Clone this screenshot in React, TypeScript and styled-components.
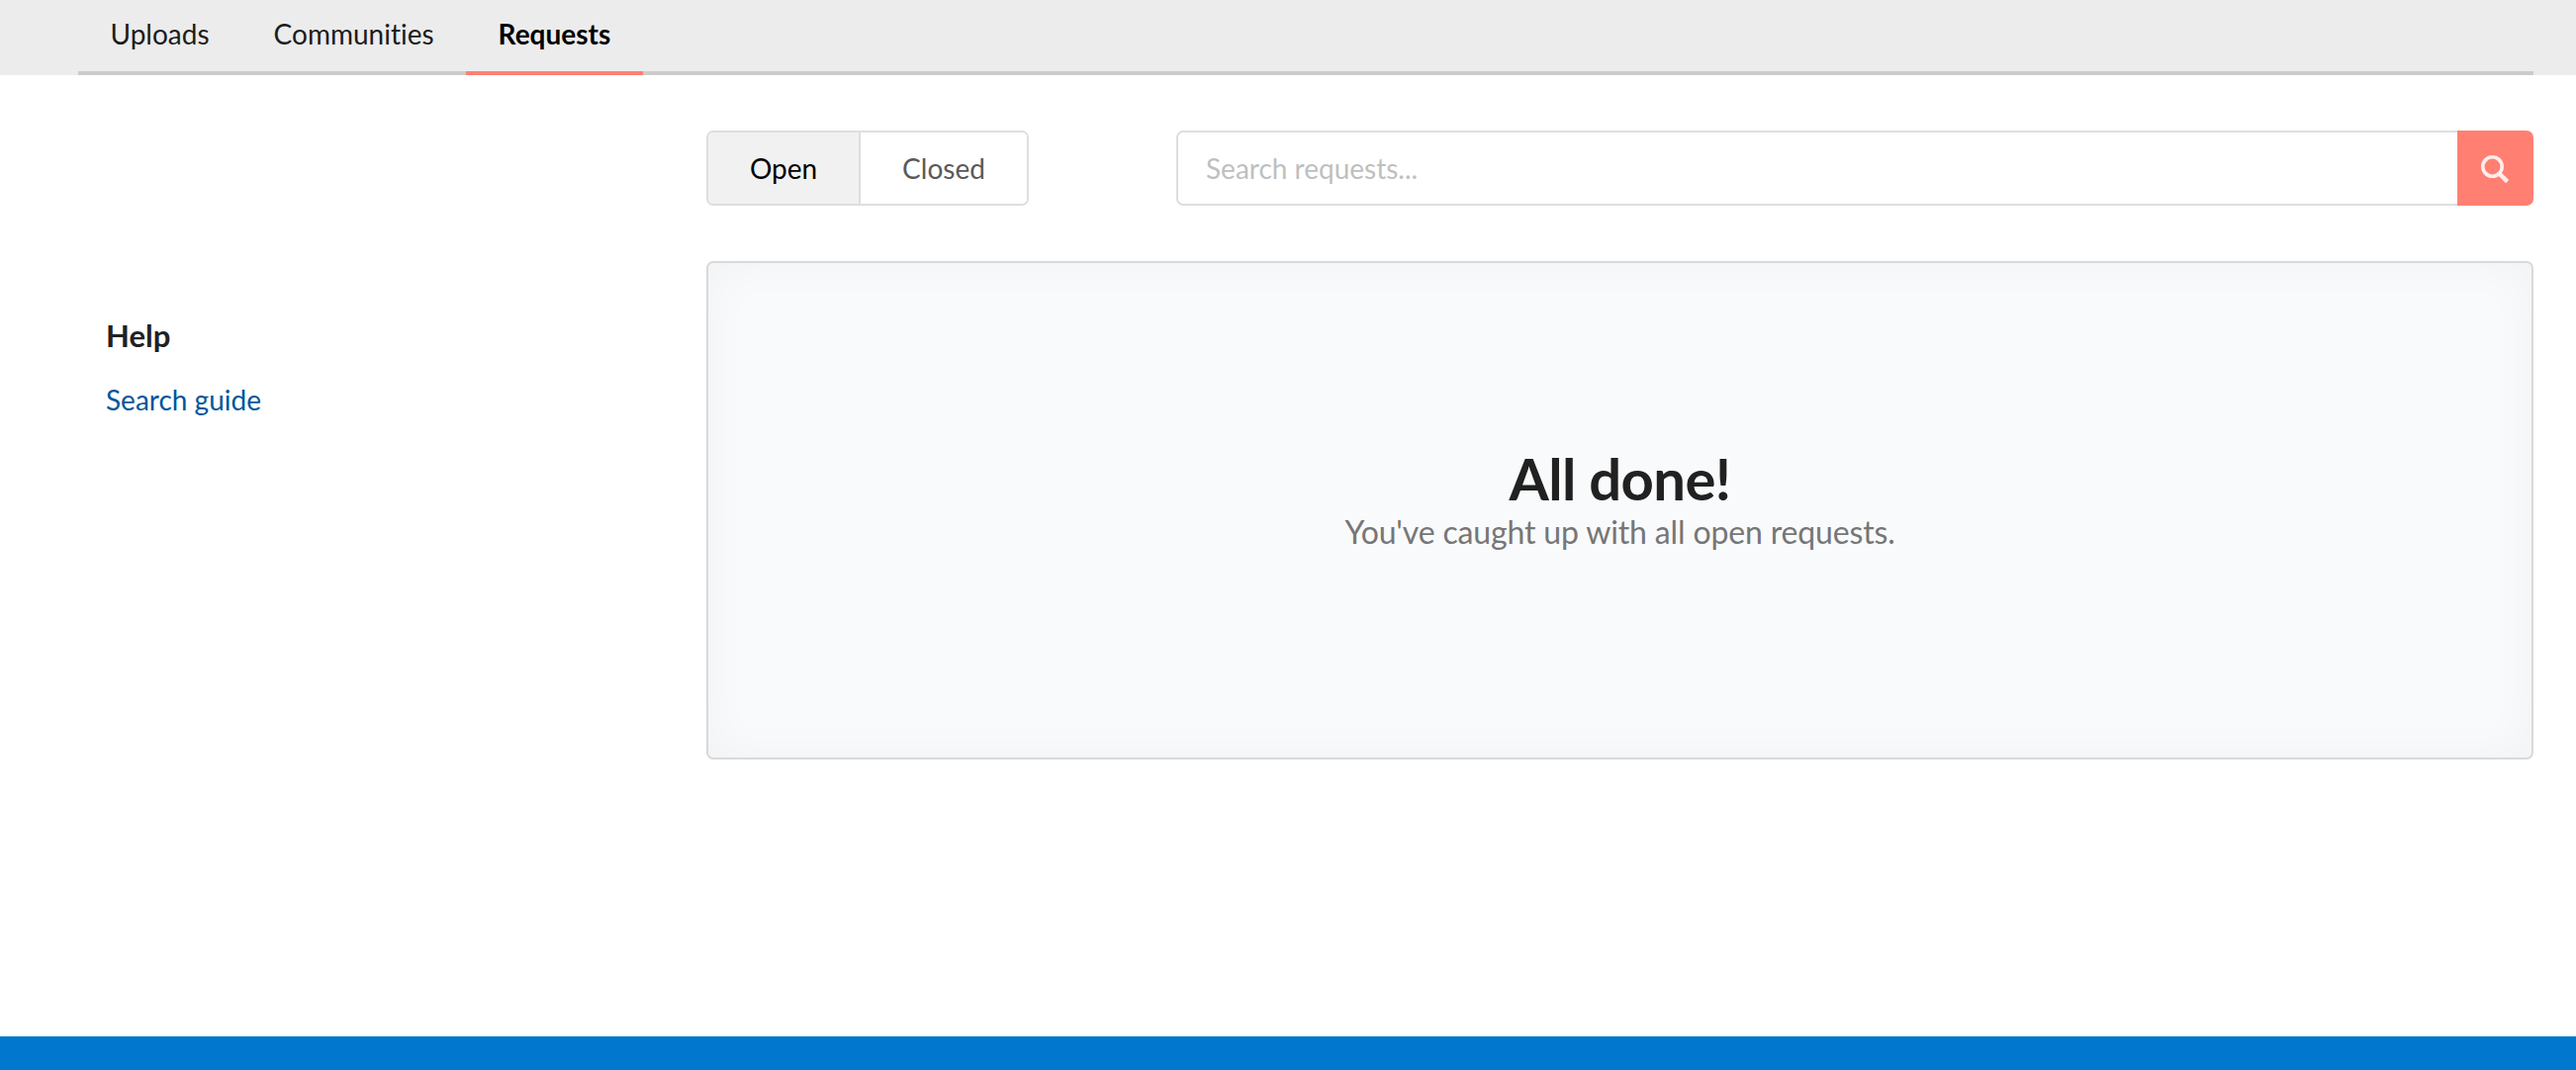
import React from 'react';
import styled, { createGlobalStyle } from 'styled-components';

const GlobalStyle = createGlobalStyle`
  html, body {
    margin: 0;
    padding: 0;
    background: #fff;
    font-family: Lato, "Open Sans", "Liberation Sans", sans-serif;
    font-variant-ligatures: none;
  }
  * { box-sizing: border-box; }
`;

const Page = styled.div`
  display: flex;
  flex-direction: column;
  min-height: 1082px;
`;

const TabBar = styled.div`
  background: #ececec;
  height: 76px;
  padding: 0 43px 0 79px;
`;

const TabList = styled.div`
  display: flex;
  height: 76px;
  border-bottom: 4px solid #cccccc;
`;

const Tab = styled.div<{ $active?: boolean }>`
  height: 76px;
  padding: 0 32.5px 4px;
  display: flex;
  align-items: center;
  font-size: 28px;
  font-weight: ${p => (p.$active ? 700 : 400)};
  color: ${p => (p.$active ? '#000' : '#1b1c1d')};
  border-bottom: 4px solid ${p => (p.$active ? '#ff8073' : 'transparent')};
`;

const Main = styled.div`
  flex: 1;
  display: flex;
  padding: 56px 43px 0 107px;
`;

const Sidebar = styled.aside`
  width: 607px;
  flex-shrink: 0;
  padding-top: 189px;
`;

const HelpTitle = styled.h4`
  margin: 0 0 29px;
  font-size: 31px;
  line-height: 36px;
  font-weight: 700;
  color: #212121;
`;

const HelpLink = styled.a`
  font-size: 28px;
  line-height: 36px;
  color: #00569c;
  text-decoration: none;
`;

const Content = styled.div`
  flex: 1;
  min-width: 0;
`;

const Toolbar = styled.div`
  display: flex;
  height: 76px;
  margin-bottom: 56px;
`;

const FilterGroup = styled.div`
  display: flex;
  width: 326px;
  height: 76px;
  border: 2px solid #dededf;
  border-radius: 7px;
  overflow: hidden;
`;

const FilterButton = styled.div<{ $active?: boolean }>`
  display: flex;
  align-items: center;
  justify-content: center;
  font-size: 28px;
  width: ${p => (p.$active ? '154px' : 'auto')};
  flex: ${p => (p.$active ? 'none' : 1)};
  background: ${p => (p.$active ? '#f1f1f2' : '#fff')};
  color: ${p => (p.$active ? '#000' : '#5a5a5a')};
  border-right: ${p => (p.$active ? '2px solid #dededf' : 'none')};
`;

const SearchForm = styled.div`
  flex: 1;
  display: flex;
  margin-left: 149px;
`;

const SearchInput = styled.input`
  flex: 1;
  min-width: 0;
  height: 76px;
  padding: 0 28px;
  border: 2px solid #dededf;
  border-right: none;
  border-radius: 7px 0 0 7px;
  outline: none;
  font-family: inherit;
  font-size: 28px;
  font-variant-ligatures: none;
  color: #212121;

  &::placeholder {
    color: #bfbfbf;
    opacity: 1;
  }
`;

const SearchButton = styled.button`
  width: 77px;
  height: 76px;
  border: none;
  padding: 3px 0 0;
  background: #ff8073;
  border-radius: 0 7px 7px 0;
  display: flex;
  align-items: center;
  justify-content: center;
`;

const EmptyPanel = styled.div`
  height: 504px;
  padding-bottom: 24px;
  border: 2px solid #d8d9da;
  border-radius: 7px;
  background: #f9fafb;
  box-shadow: inset 0 0 48px rgba(34, 36, 38, 0.035);
  display: flex;
  flex-direction: column;
  align-items: center;
  justify-content: center;
`;

const EmptyTitle = styled.h2`
  margin: 0;
  font-size: 58px;
  line-height: 68px;
  font-weight: 700;
  letter-spacing: -0.6px;
  color: #212121;
`;

const EmptyText = styled.p`
  margin: 0;
  font-size: 32px;
  line-height: 40px;
  letter-spacing: -0.15px;
  color: #767676;
`;

const Footer = styled.footer`
  height: 34px;
  background: #0277ce;
`;

const SearchIcon = () => (
  <svg width="29" height="29" viewBox="0 0 29 29" fill="none" stroke="#ffeeec" strokeWidth="3.6">
    <circle cx="11.5" cy="11.5" r="9.7" />
    <path d="M18.5 18.5 L26.6 26.6" strokeWidth="4.4" />
  </svg>
);

export default function App() {
  return (
    <Page>
      <GlobalStyle />
      <TabBar>
        <TabList>
          <Tab>Uploads</Tab>
          <Tab>Communities</Tab>
          <Tab $active>Requests</Tab>
        </TabList>
      </TabBar>
      <Main>
        <Sidebar>
          <HelpTitle>Help</HelpTitle>
          <HelpLink href="#">Search guide</HelpLink>
        </Sidebar>
        <Content>
          <Toolbar>
            <FilterGroup>
              <FilterButton $active>Open</FilterButton>
              <FilterButton>Closed</FilterButton>
            </FilterGroup>
            <SearchForm>
              <SearchInput placeholder="Search requests..." />
              <SearchButton aria-label="Search">
                <SearchIcon />
              </SearchButton>
            </SearchForm>
          </Toolbar>
          <EmptyPanel>
            <EmptyTitle>All done!</EmptyTitle>
            <EmptyText>You've caught up with all open requests.</EmptyText>
          </EmptyPanel>
        </Content>
      </Main>
      <Footer />
    </Page>
  );
}
